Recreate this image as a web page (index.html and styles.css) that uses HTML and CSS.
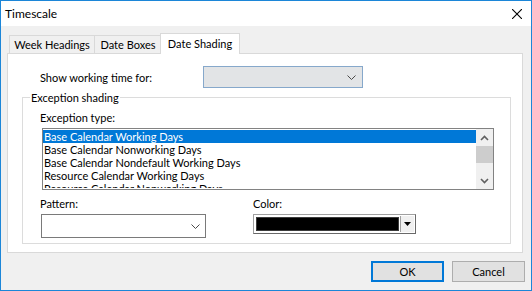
FILE: index.html
```html
<!DOCTYPE html>
<html lang="en">
  <head>
    <meta charset="UTF-8">
    <title>Timescale</title>
    <link rel="stylesheet" href="styles.css">
  </head>
  <body>
    <div class="window">
      <div class="titlebar">
        <span class="title">Timescale</span>
        <svg class="close" width="10" height="10" viewBox="0 0 10 10">
          <path d="M0 0L10 10M10 0L0 10" stroke="#000" stroke-width="1.1" fill="none" />
        </svg>
      </div>

      <div class="body">
        <div class="tabs">
          <div class="tab week">Week Headings</div>
          <div class="tab boxes">Date Boxes</div>
          <div class="tab active">Date Shading</div>
        </div>

        <div class="panel">
          <div class="row-working">
            <span class="working-label">Show working time for:</span>
            <div class="combo working">
              <svg class="chevron" width="9" height="5" viewBox="0 0 9 5">
                <path d="M0.5 0.5L4.5 4.5L8.5 0.5" stroke="#4a4a4a" fill="none" />
              </svg>
            </div>
          </div>

          <div class="group">
            <span class="legend">Exception shading</span>
            <div class="type-label">Exception type:</div>
            <div class="listbox">
              <ul class="items">
                <li class="selected">Base Calendar Working Days</li>
                <li>Base Calendar Nonworking Days</li>
                <li>Base Calendar Nondefault Working Days</li>
                <li>Resource Calendar Working Days</li>
                <li>Resource Calendar Nonworking Days</li>
              </ul>
              <div class="scrollbar">
                <div class="arrow">
                  <svg width="9" height="6" viewBox="0 0 9 6">
                    <path d="M1 5L4.5 1.5L8 5" stroke="#606060" stroke-width="1.6" fill="none" />
                  </svg>
                </div>
                <div class="thumb"></div>
                <div class="track"></div>
                <div class="arrow">
                  <svg width="9" height="6" viewBox="0 0 9 6">
                    <path d="M1 1L4.5 4.5L8 1" stroke="#606060" stroke-width="1.6" fill="none" />
                  </svg>
                </div>
              </div>
            </div>

            <div class="pickers">
              <div class="picker pattern-col">
                <div class="picker-label">Pattern:</div>
                <div class="combo pattern">
                  <svg class="chevron" width="9" height="5" viewBox="0 0 9 5">
                    <path d="M0.5 0.5L4.5 4.5L8.5 0.5" stroke="#4a4a4a" fill="none" />
                  </svg>
                </div>
              </div>
              <div class="picker color-col">
                <div class="picker-label">Color:</div>
                <div class="color-box">
                  <div class="swatch"></div>
                  <div class="drop">
                    <svg width="7" height="4" viewBox="0 0 7 4">
                      <polygon points="0,0 7,0 3.5,4" fill="#000" />
                    </svg>
                  </div>
                </div>
              </div>
            </div>
          </div>
        </div>

        <div class="buttons">
          <div class="btn default">OK</div>
          <div class="btn">Cancel</div>
        </div>
      </div>
    </div>
  </body>
</html>
```

FILE: styles.css
```css
* {
  box-sizing: border-box;
}

body {
  margin: 0;
  font-family: 'Lato', 'Liberation Sans', sans-serif;
  font-size: 11px;
  color: #000;
  overflow: hidden;
}

.window {
  width: 532px;
  height: 291px;
  border: 1px solid #1c86d8;
  display: flex;
  flex-direction: column;
  background: #f0f0f0;
}

.titlebar {
  height: 25px;
  background: #fff;
  display: flex;
  align-items: center;
  padding-left: 4px;
  font-size: 12px;
}

.close {
  margin-left: auto;
  margin-right: 9px;
}

.body {
  flex: 1;
  padding: 7px 6px 0 6px;
}

/* tabs */
.tabs {
  display: flex;
  align-items: flex-end;
  height: 20px;
  padding-left: 2px;
}

.tab {
  height: 18px;
  line-height: 17px;
  border: 1px solid #d9d9d9;
  border-bottom: none;
  background: #f0f0f0;
  text-align: center;
  white-space: nowrap;
}

.tab.week {
  width: 86px;
}

.tab.boxes {
  width: 68px;
  margin-left: -1px;
}

.tab.active {
  width: 80px;
  height: 21px;
  line-height: 19px;
  margin-left: -2px;
  margin-bottom: -1px;
  background: #fff;
  position: relative;
  z-index: 1;
}

.panel {
  width: 516px;
  height: 200px;
  background: #fff;
  border: 1px solid #d9d9d9;
}

/* first row */
.row-working {
  display: flex;
  align-items: center;
  margin-top: 12px;
  padding-left: 32px;
}

.working-label {
  width: 163px;
}

.combo {
  display: flex;
  align-items: center;
  justify-content: flex-end;
  padding-right: 6px;
}

.combo.working {
  width: 160px;
  height: 22px;
  background: #e2e4e6;
  border: 1px solid #86a8cb;
}

/* group box */
.group {
  width: 489px;
  height: 147px;
  margin: 9px 0 0 14px;
  border: 1px solid #dcdcdc;
}

.legend {
  display: block;
  width: fit-content;
  margin: -8px 0 0 7px;
  padding: 0 1px;
  line-height: 15px;
  background: #fff;
}

.type-label {
  margin-top: 5px;
  padding-left: 17px;
  line-height: 15px;
}

.listbox {
  display: flex;
  width: 452px;
  height: 62px;
  margin: 3px 0 0 19px;
  border: 1px solid #828282;
  padding: 1px 0 1px 0;
  overflow: hidden;
}

.items {
  flex: 1;
  margin: 0;
  padding: 0;
  list-style: none;
  overflow: hidden;
}

.items li {
  height: 13px;
  line-height: 13px;
  padding-left: 1px;
  white-space: nowrap;
}

.items li.selected {
  background: #0078d7;
  color: #fff;
}

.scrollbar {
  width: 17px;
  display: flex;
  flex-direction: column;
  background: #f0f0f0;
  margin-top: -1px;
  height: 60px;
}

.arrow {
  height: 17px;
  display: flex;
  align-items: center;
  justify-content: center;
}

.thumb {
  height: 17px;
  background: #cdcdcd;
}

.track {
  flex: 1;
}

/* pattern and color */
.pickers {
  display: flex;
  margin-top: 6px;
}

.picker-label {
  line-height: 15px;
}

.pattern-col {
  width: 183px;
  padding-left: 17px;
}

.combo.pattern {
  width: 165px;
  height: 24px;
  margin: 3px 0 0 1px;
  background: #fff;
  border: 1px solid #7a7a7a;
  padding-right: 5px;
}

.color-col {
  margin-left: 47px;
}

.color-box {
  display: flex;
  width: 163px;
  height: 20px;
  margin-top: 3px;
  border: 1px solid #a0a0a0;
  border-right-color: #696969;
  border-bottom-color: #696969;
  background: #fff;
  padding: 1px;
}

.swatch {
  flex: 1;
  margin: 1px;
  background: #000;
  border: 1px solid #3c3c3c;
}

.drop {
  width: 14px;
  display: flex;
  align-items: center;
  justify-content: center;
  background: #f0f0f0;
  border-left: 1px solid #a0a0a0;
}

/* bottom buttons */
.buttons {
  display: flex;
  justify-content: flex-end;
  gap: 8px;
  margin-top: 8px;
}

.btn {
  width: 73px;
  height: 21px;
  display: flex;
  align-items: center;
  justify-content: center;
  background: #e1e1e1;
  border: 1px solid #adadad;
}

.btn.default {
  border: 2px solid #0078d7;
}
```
